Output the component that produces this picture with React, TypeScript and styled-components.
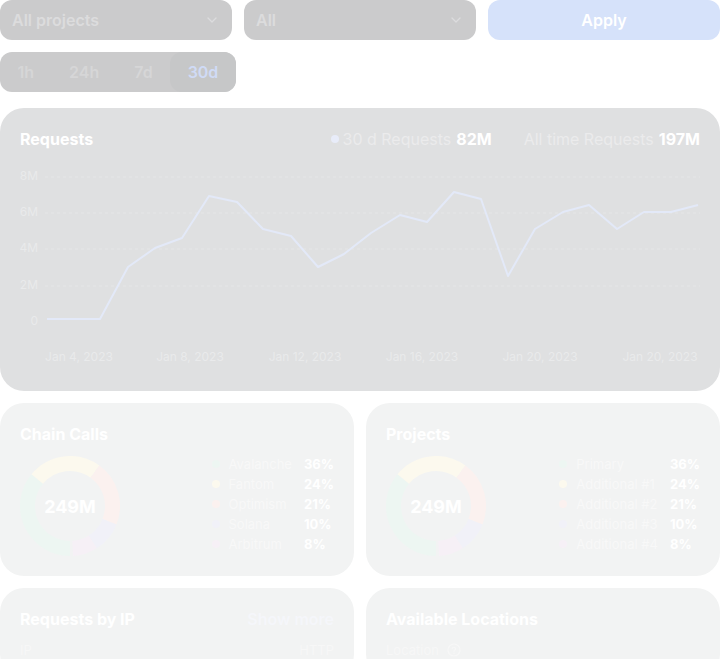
import { Fragment } from 'react';
import styled, { createGlobalStyle } from 'styled-components';
import { ChevronDown } from 'lucide-react';

const GlobalStyle = createGlobalStyle`
  html, body {
    margin: 0;
    padding: 0;
    background: #ffffff;
  }
  * {
    box-sizing: border-box;
  }
  body {
    font-family: Inter, 'Noto Sans', 'Liberation Sans', sans-serif;
  }
`;

export const Page = styled.div`
  display: flex;
  flex-direction: column;
  gap: 12px;
  width: 720px;
`;

export const FilterRow = styled.div`
  display: grid;
  grid-template-columns: repeat(3, 1fr);
  gap: 12px;
`;

export const Select = styled.div`
  display: flex;
  align-items: center;
  justify-content: space-between;
  height: 40px;
  padding: 0 12px;
  background-color: #cbcbcc;
  border-radius: 12px;
  color: #dcdcdd;
  font-size: 16px;
  font-weight: 600;
`;

export const ApplyButton = styled.button`
  height: 40px;
  border: none;
  border-radius: 12px;
  background-color: #d6e2fa;
  color: #ffffff;
  font-family: inherit;
  font-size: 16px;
  font-weight: 600;
  cursor: pointer;
`;

export const Segments = styled.div`
  display: flex;
  align-self: flex-start;
  height: 40px;
  background-color: #cbcbcc;
  border-radius: 12px;
  margin-bottom: 4px;
`;

export const SegmentItem = styled.div<{ $active?: boolean }>`
  display: flex;
  align-items: center;
  padding: 0 17.5px;
  border-radius: 12px;
  font-size: 16px;
  font-weight: 600;
  color: ${(p) => (p.$active ? '#d0dbf6' : '#d6d6d7')};
  background-color: ${(p) => (p.$active ? '#c6c7c8' : 'transparent')};
`;

export const Card = styled.div<{ $tone?: 'dark' | 'light' }>`
  display: flex;
  flex-direction: column;
  padding: 20px;
  border-radius: 24px;
  background-color: ${(p) => (p.$tone === 'dark' ? '#dfe0e1' : '#f2f3f3')};
`;

export const CardHeader = styled.div`
  display: flex;
  align-items: center;
  justify-content: space-between;
  height: 22px;
`;

export const Title = styled.h2`
  margin: 0;
  font-size: 16px;
  font-weight: 700;
  color: #ffffff;
`;

export const Stats = styled.div`
  display: flex;
  align-items: center;
  gap: 32px;
`;

export const Stat = styled.div`
  display: flex;
  align-items: center;
  gap: 5px;
  font-size: 16px;
  color: #ebebec;

  b {
    color: #ffffff;
    font-weight: 700;
  }
`;

export const StatDot = styled.span`
  width: 8px;
  height: 8px;
  border-radius: 50%;
  background-color: #e8ecf9;
  margin-right: -1px;
`;

export const Chart = styled.svg`
  display: block;
  margin-top: 12px;
  margin-bottom: -1px;
`;

export const CardGrid = styled.div`
  display: grid;
  grid-template-columns: 1fr 1fr;
  gap: 12px;
`;

export const DonutRow = styled.div`
  display: flex;
  align-items: center;
  justify-content: space-between;
  margin-top: 11px;
`;

export const DonutWrap = styled.div`
  position: relative;
  width: 100px;
  height: 100px;
`;

export const DonutLabel = styled.div`
  position: absolute;
  inset: 0;
  display: flex;
  align-items: center;
  justify-content: center;
  font-size: 18px;
  font-weight: 700;
  color: #ffffff;
`;

export const Legend = styled.div`
  display: grid;
  grid-template-columns: 8px auto auto;
  column-gap: 9px;
  align-items: center;
  margin-top: -4px;
`;

export const LegendDot = styled.span<{ $color: string }>`
  width: 8px;
  height: 8px;
  border-radius: 50%;
  background-color: ${(p) => p.$color};
`;

export const LegendName = styled.span`
  font-size: 13px;
  line-height: 20px;
  color: #f8f8f8;
  margin-right: 3px;
`;

export const LegendPct = styled.span`
  font-size: 13px;
  line-height: 20px;
  font-weight: 700;
  color: #ffffff;
`;

export const ShowMore = styled.span`
  font-size: 16px;
  font-weight: 600;
  color: #f5f6fa;
`;

export const TableHead = styled.div`
  display: flex;
  align-items: center;
  justify-content: space-between;
  margin-top: 12px;
  font-size: 13px;
  color: #f7f7f7;
`;

export const HeadCell = styled.span`
  display: flex;
  align-items: center;
  gap: 8px;
`;

export const Bottom = styled.div`
  height: 80px;
  overflow: hidden;
`;

const line: [number, number][] = [
  [47, 319], [100, 319], [128, 267], [155, 248], [182, 238], [209, 196],
  [237, 202], [263, 229], [291, 236], [318, 267], [344, 254], [371, 233],
  [400, 215], [427, 222], [454, 192], [481, 199], [508, 276], [535, 229],
  [563, 212], [589, 205], [617, 229], [644, 212], [671, 212], [698, 205],
];

const yTicks = [
  { label: '8M', y: 177 },
  { label: '6M', y: 213 },
  { label: '4M', y: 249 },
  { label: '2M', y: 286 },
  { label: '0', y: 322 },
];

const xTicks = [
  { label: 'Jan 4, 2023', x: 79 },
  { label: 'Jan 8, 2023', x: 190 },
  { label: 'Jan 12, 2023', x: 305 },
  { label: 'Jan 16, 2023', x: 422 },
  { label: 'Jan 20, 2023', x: 540 },
  { label: 'Jan 20, 2023', x: 660 },
];

// chart svg starts at page (20, 162)
const OX = 20;
const OY = 162;

const RequestsChart = () => (
  <Chart width={680} height={210} viewBox="0 0 680 210">
    {yTicks.map((t) => (
      <g key={t.label}>
        {t.label !== '0' && (
          <line
            x1={45 - OX}
            x2={700 - OX}
            y1={t.y - OY}
            y2={t.y - OY}
            stroke="#e5e6e7"
            strokeDasharray="3 3"
          />
        )}
        <text
          x={38 - OX}
          y={t.y - OY}
          textAnchor="end"
          dominantBaseline="middle"
          fontSize={12}
          fill="#e9eaeb"
          fontFamily="Inter, sans-serif"
        >
          {t.label}
        </text>
      </g>
    ))}
    <polyline
      points={line.map(([x, y]) => `${x - OX},${y - OY}`).join(' ')}
      fill="none"
      stroke="#e3e9f8"
      strokeWidth={2}
      strokeLinejoin="round"
    />
    {xTicks.map((t, i) => (
      <text
        key={i}
        x={t.x - OX}
        y={358 - OY}
        textAnchor="middle"
        dominantBaseline="middle"
        fontSize={12}
        fill="#e9eaeb"
        fontFamily="Inter, sans-serif"
      >
        {t.label}
      </text>
    ))}
  </Chart>
);

type Slice = { name: string; pct: number; color: string };

const ringColors = ['#edf6f2', '#fcf9ee', '#fbf1ef', '#f1f1f8', '#f6f0f6'];

const arc = (cx: number, cy: number, r: number, a0: number, a1: number) => {
  const p = (a: number) => [cx + r * Math.sin(a), cy - r * Math.cos(a)];
  const [x0, y0] = p(a0);
  const [x1, y1] = p(a1);
  const large = a1 - a0 > Math.PI ? 1 : 0;
  return `M ${x0} ${y0} A ${r} ${r} 0 ${large} 1 ${x1} ${y1}`;
};

const Donut = ({ slices }: { slices: Slice[] }) => {
  let start = Math.PI;
  return (
    <DonutWrap>
      <svg width={100} height={100} viewBox="0 0 100 100">
        {slices.map((s) => {
          const end = start + (s.pct / 100) * Math.PI * 2;
          const d = arc(50, 50, 42.5, start, end);
          start = end;
          return <path key={s.name} d={d} fill="none" stroke={s.color} strokeWidth={15} />;
        })}
      </svg>
      <DonutLabel>249M</DonutLabel>
    </DonutWrap>
  );
};

const DonutCard = ({ title, names }: { title: string; names: string[] }) => {
  const pcts = [36, 24, 21, 10, 8];
  const slices = names.map((name, i) => ({ name, pct: pcts[i], color: ringColors[i] }));
  return (
    <Card $tone="light">
      <CardHeader>
        <Title>{title}</Title>
      </CardHeader>
      <DonutRow>
        <Donut slices={slices} />
        <Legend>
          {slices.map((s) => (
            <Fragment key={s.name}>
              <LegendDot $color={s.color} />
              <LegendName>{s.name}</LegendName>
              <LegendPct>{s.pct}%</LegendPct>
            </Fragment>
          ))}
        </Legend>
      </DonutRow>
    </Card>
  );
};

const InfoIcon = () => (
  <svg width={14} height={14} viewBox="0 0 14 14" fill="none">
    <circle cx={7} cy={7} r={6} stroke="#f7f7f7" strokeWidth={1.2} />
    <path d="M5.3 5.4a1.7 1.7 0 0 1 3.3.5c0 1.1-1.6 1.3-1.6 2.3" stroke="#f7f7f7" strokeWidth={1.2} strokeLinecap="round" />
    <circle cx={7} cy={10.2} r={0.7} fill="#f7f7f7" />
  </svg>
);

const App = () => (
  <>
    <GlobalStyle />
    <Page>
      <FilterRow>
        <Select>
          All projects
          <ChevronDown size={16} strokeWidth={2} color="#dcdcdd" />
        </Select>
        <Select>
          All
          <ChevronDown size={16} strokeWidth={2} color="#dcdcdd" />
        </Select>
        <ApplyButton>Apply</ApplyButton>
      </FilterRow>

      <Segments>
        <SegmentItem>1h</SegmentItem>
        <SegmentItem>24h</SegmentItem>
        <SegmentItem>7d</SegmentItem>
        <SegmentItem $active>30d</SegmentItem>
      </Segments>

      <Card $tone="dark">
        <CardHeader>
          <Title>Requests</Title>
          <Stats>
            <Stat>
              <StatDot />
              30 d Requests <b>82M</b>
            </Stat>
            <Stat>
              All time Requests <b>197M</b>
            </Stat>
          </Stats>
        </CardHeader>
        <RequestsChart />
      </Card>

      <CardGrid>
        <DonutCard title="Chain Calls" names={['Avalanche', 'Fantom', 'Optimism', 'Solana', 'Arbitrum']} />
        <DonutCard
          title="Projects"
          names={['Primary', 'Additional #1', 'Additional #2', 'Additional #3', 'Additional #4']}
        />
      </CardGrid>

      <Bottom>
        <CardGrid>
          <Card $tone="light">
            <CardHeader>
              <Title>Requests by IP</Title>
              <ShowMore>Show more</ShowMore>
            </CardHeader>
            <TableHead>
              <HeadCell>IP</HeadCell>
              <HeadCell>HTTP</HeadCell>
            </TableHead>
          </Card>
          <Card $tone="light">
            <CardHeader>
              <Title>Available Locations</Title>
            </CardHeader>
            <TableHead>
              <HeadCell>
                Location <InfoIcon />
              </HeadCell>
            </TableHead>
          </Card>
        </CardGrid>
      </Bottom>
    </Page>
  </>
);

export default App;
